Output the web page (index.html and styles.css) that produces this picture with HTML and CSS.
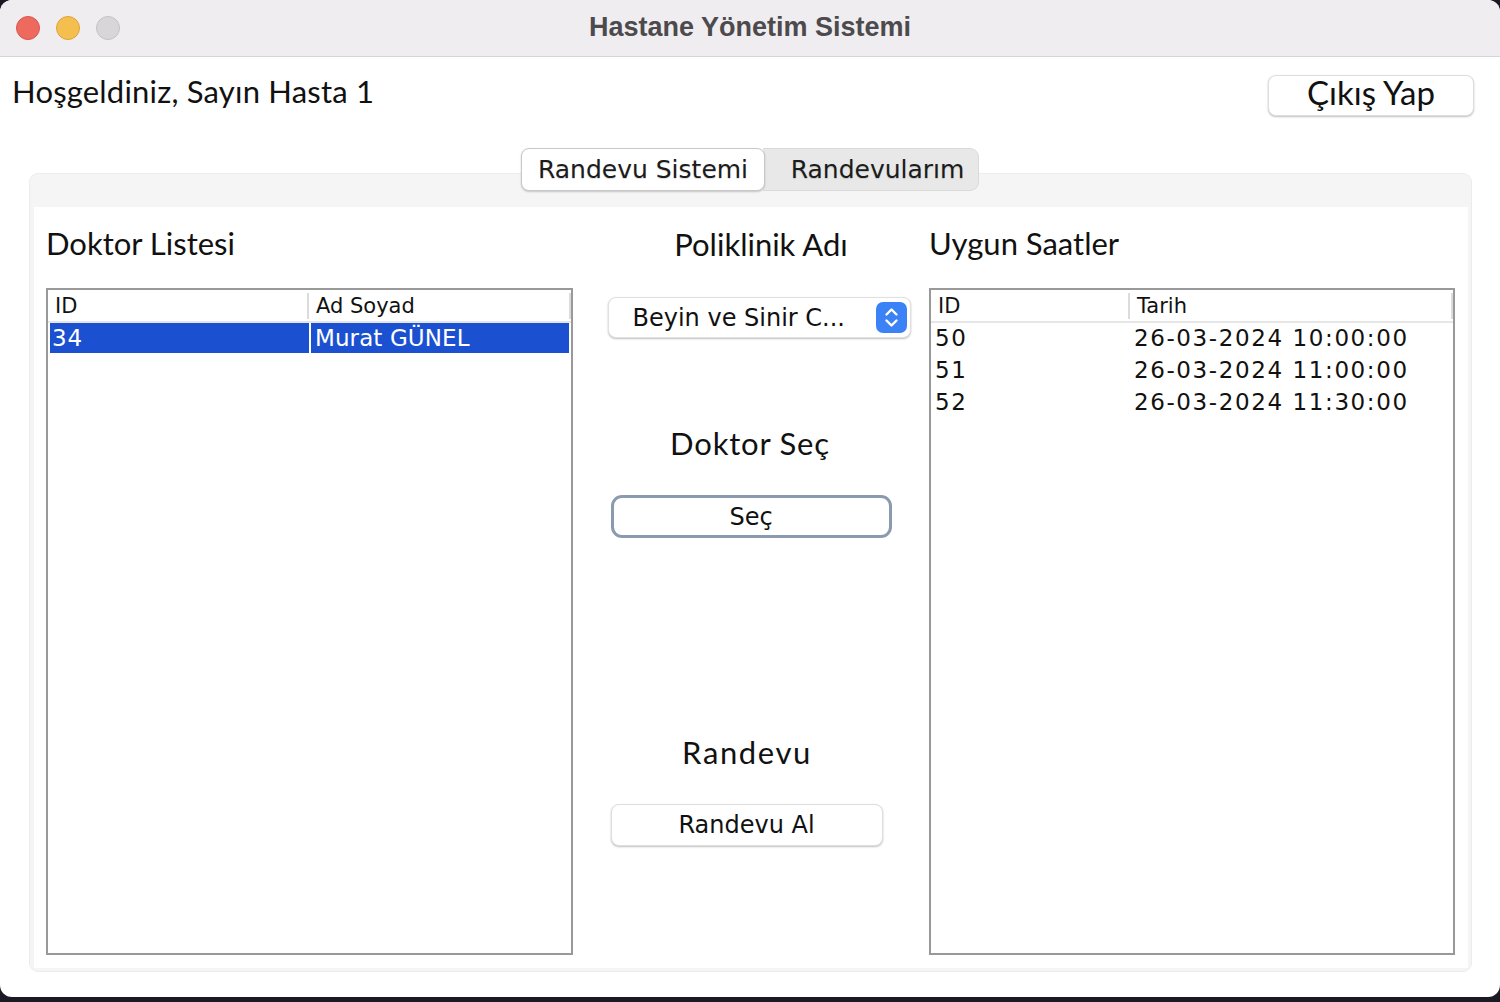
FILE: index.html
```html
<!DOCTYPE html>
<html lang="tr">
<head>
<meta charset="utf-8">
<title>Hastane Yönetim Sistemi</title>
<link rel="stylesheet" href="styles.css">
</head>
<body>
<div class="window">
  <div class="titlebar">
    <div class="lights">
      <span class="light red"></span>
      <span class="light yellow"></span>
      <span class="light gray"></span>
    </div>
    <div class="title">Hastane Yönetim Sistemi</div>
  </div>
  <div class="content">
    <div class="topbar">
      <div class="welcome">Hoşgeldiniz, Sayın Hasta 1</div>
      <button class="btn exit">Çıkış Yap</button>
    </div>
    <div class="tabs">
      <div class="tab active">Randevu Sistemi</div>
      <div class="tab">Randevularım</div>
    </div>
    <div class="panel">
      <div class="inner">
        <div class="col left">
          <div class="heading">Doktor Listesi</div>
          <div class="table">
            <div class="thead doc">
              <div class="th">ID</div>
              <div class="th">Ad Soyad</div>
            </div>
            <div class="tr doc selected">
              <div class="td">34</div>
              <div class="td">Murat GÜNEL</div>
            </div>
          </div>
        </div>
        <div class="col middle">
          <div class="label lbl-poli">Poliklinik Adı</div>
          <div class="combo">
            <span class="combo-text">Beyin ve Sinir C...</span>
            <span class="stepper">
              <svg width="31" height="31" viewBox="0 0 31 31">
                <rect x="0" y="0" width="31" height="31" rx="7" fill="#3b82f6"/>
                <path d="M10.5 12.5 L15.5 7.5 L20.5 12.5" fill="none" stroke="#fff" stroke-width="2.4" stroke-linecap="round" stroke-linejoin="round"/>
                <path d="M10.5 18.5 L15.5 23.5 L20.5 18.5" fill="none" stroke="#fff" stroke-width="2.4" stroke-linecap="round" stroke-linejoin="round"/>
              </svg>
            </span>
          </div>
          <div class="label lbl-doc">Doktor Seç</div>
          <button class="btn sec">Seç</button>
          <div class="label lbl-ran">Randevu</div>
          <button class="btn randevu">Randevu Al</button>
        </div>
        <div class="col right">
          <div class="heading">Uygun Saatler</div>
          <div class="table">
            <div class="thead slot">
              <div class="th">ID</div>
              <div class="th">Tarih</div>
            </div>
            <div class="tr slot">
              <div class="td">50</div>
              <div class="td">26-03-2024 10:00:00</div>
            </div>
            <div class="tr slot">
              <div class="td">51</div>
              <div class="td">26-03-2024 11:00:00</div>
            </div>
            <div class="tr slot">
              <div class="td">52</div>
              <div class="td">26-03-2024 11:30:00</div>
            </div>
          </div>
        </div>
      </div>
    </div>
  </div>
</div>
</body>
</html>
```

FILE: styles.css
```css
* { box-sizing: border-box; }
html, body {
  margin: 0;
  padding: 0;
  width: 1500px;
  height: 1002px;
  overflow: hidden;
  background: #1b1a24;
}
.window {
  width: 1500px;
  height: 997px;
  background: #fff;
  border-radius: 12px;
  overflow: hidden;
  display: flex;
  flex-direction: column;
}
.titlebar {
  height: 57px;
  background: #efedef;
  border-bottom: 1px solid #d6d4d6;
  display: flex;
  align-items: center;
  position: relative;
}
.lights {
  display: flex;
  gap: 16px;
  padding-left: 16px;
}
.light {
  width: 24px;
  height: 24px;
  border-radius: 50%;
  display: block;
}
.light.red { background: #ee6a5f; border: 1px solid #d9564c; }
.light.yellow { background: #f5bf4f; border: 1px solid #dca43a; }
.light.gray { background: #d8d6d8; border: 1px solid #c4c2c4; }
.title {
  position: absolute;
  left: 0;
  right: 0;
  top: 0;
  bottom: 2px;
  display: flex;
  align-items: center;
  justify-content: center;
  font-family: "Liberation Sans", Arial, sans-serif;
  font-weight: bold;
  font-size: 27px;
  color: #4c4a4c;
  pointer-events: none;
}
.content {
  flex: 1;
  display: flex;
  flex-direction: column;
}
.topbar {
  display: flex;
  justify-content: space-between;
  align-items: flex-start;
  padding: 18px 26px 0 12px;
  height: 91px;
}
.welcome {
  font-family: "Lato", "Open Sans", sans-serif;
  font-size: 31px;
  color: #111;
  margin-top: -3px;
  letter-spacing: 0.2px;
}
.btn {
  background: #fff;
  border: 1px solid #dedede;
  border-radius: 8px;
  box-shadow: 0 1px 2px rgba(0,0,0,0.25);
  font-family: "DejaVu Sans", sans-serif;
  color: #111;
  padding: 0;
  cursor: default;
}
.exit {
  width: 206px;
  height: 41px;
  margin-top: 0;
  font-family: "Lato", "Open Sans", sans-serif;
  font-size: 33px;
  line-height: 30px;
  padding-bottom: 8px;
}
.tabs {
  display: flex;
  justify-content: center;
  position: relative;
  z-index: 2;
  margin-bottom: -18px;
}
.tab {
  font-family: "DejaVu Sans", sans-serif;
  font-size: 25px;
  color: #1c1c1c;
  height: 43px;
  line-height: 41px;
  background: #e8e8e8;
  border: 1px solid #dadada;
  text-shadow: 0 1px 1px rgba(0,0,0,0.15);
}
.tab.active {
  width: 244px;
  background: #fff;
  border-radius: 8px;
  border-color: #c8c8c8;
  box-shadow: 0 1px 2px rgba(0,0,0,0.2);
  text-align: center;
  position: relative;
  z-index: 1;
}
.tab:not(.active) {
  width: 216px;
  border-left: none;
  border-radius: 0 9px 9px 0;
  text-align: center;
  padding-left: 14px;
  margin-left: -2px;
}
.panel {
  margin: 0 28px 0 29px;
  height: 799px;
  background: #f5f5f5;
  border: 1px solid #ececec;
  border-radius: 9px;
  padding: 33px 3px 3px 4px;
  display: flex;
}
.inner {
  flex: 1;
  background: #fff;
  display: grid;
  grid-template-columns: 527px 356px 526px;
  padding: 0 12px 13px 12px;
}
.col {
  display: flex;
  flex-direction: column;
}
.heading {
  font-family: "Lato", "Open Sans", sans-serif;
  font-size: 31px;
  color: #111;
  height: 81px;
  padding-top: 17px;
  padding-left: 0;
}
.table {
  flex: 1;
  border: 2px solid #999;
  font-family: "DejaVu Sans", sans-serif;
  color: #111;
}
.thead {
  display: grid;
  height: 33px;
  border-bottom: 2px solid #e6e6e6;
  font-size: 21px;
  align-items: center;
}
.thead.doc { grid-template-columns: 261px 1fr; }
.thead.slot { grid-template-columns: 199px 1fr; }
.th {
  padding-left: 7px;
  height: 26px;
  line-height: 26px;
  border-right: 2px solid #dcdcdc;
}
.tr {
  display: grid;
  height: 32px;
  font-size: 23px;
  line-height: 31px;
}
.tr.doc { grid-template-columns: 261px 1fr; height: 30px; line-height: 30px; margin: 0 2px; }
.tr.slot { grid-template-columns: 199px 1fr; }
.td {
  padding-left: 4px;
  white-space: nowrap;
  letter-spacing: 1.6px;
}
.tr.doc .td { letter-spacing: 0.1px; }
.tr.selected .td {
  background: #1b51d1;
  color: #fff;
}
.tr.selected .td:first-child {
  border-right: 2px solid #fff;
  padding-left: 2px;
  letter-spacing: 0.8px;
}
.middle {
  align-items: center;
}
.label {
  font-family: "Lato", "Open Sans", sans-serif;
  font-size: 31px;
  color: #111;
  line-height: 40px;
}
.lbl-poli { margin-top: 17px; margin-left: 20px; }
.combo {
  margin-top: 33px;
  margin-left: 16px;
  width: 303px;
  height: 41px;
  background: #fff;
  border: 1px solid #e0e0e0;
  border-radius: 8px;
  box-shadow: 0 1px 2px rgba(0,0,0,0.25);
  display: flex;
  align-items: center;
  justify-content: space-between;
  padding: 0 3px 0 24px;
  font-family: "DejaVu Sans", sans-serif;
  font-size: 24px;
  color: #111;
}
.stepper { display: flex; }
.lbl-doc { margin-top: 85px; margin-left: -2px; letter-spacing: 0.8px; }
.sec {
  margin-top: 32px;
  width: 281px;
  height: 43px;
  border: 3px solid #8b9aae;
  border-radius: 11px;
  box-shadow: none;
  font-size: 24px;
  line-height: 36px;
}
.lbl-ran { margin-top: 194px; margin-left: -8px; letter-spacing: 1.6px; }
.randevu {
  margin-top: 32px;
  margin-left: -9px;
  width: 272px;
  height: 42px;
  font-size: 24px;
  line-height: 38px;
}
```
